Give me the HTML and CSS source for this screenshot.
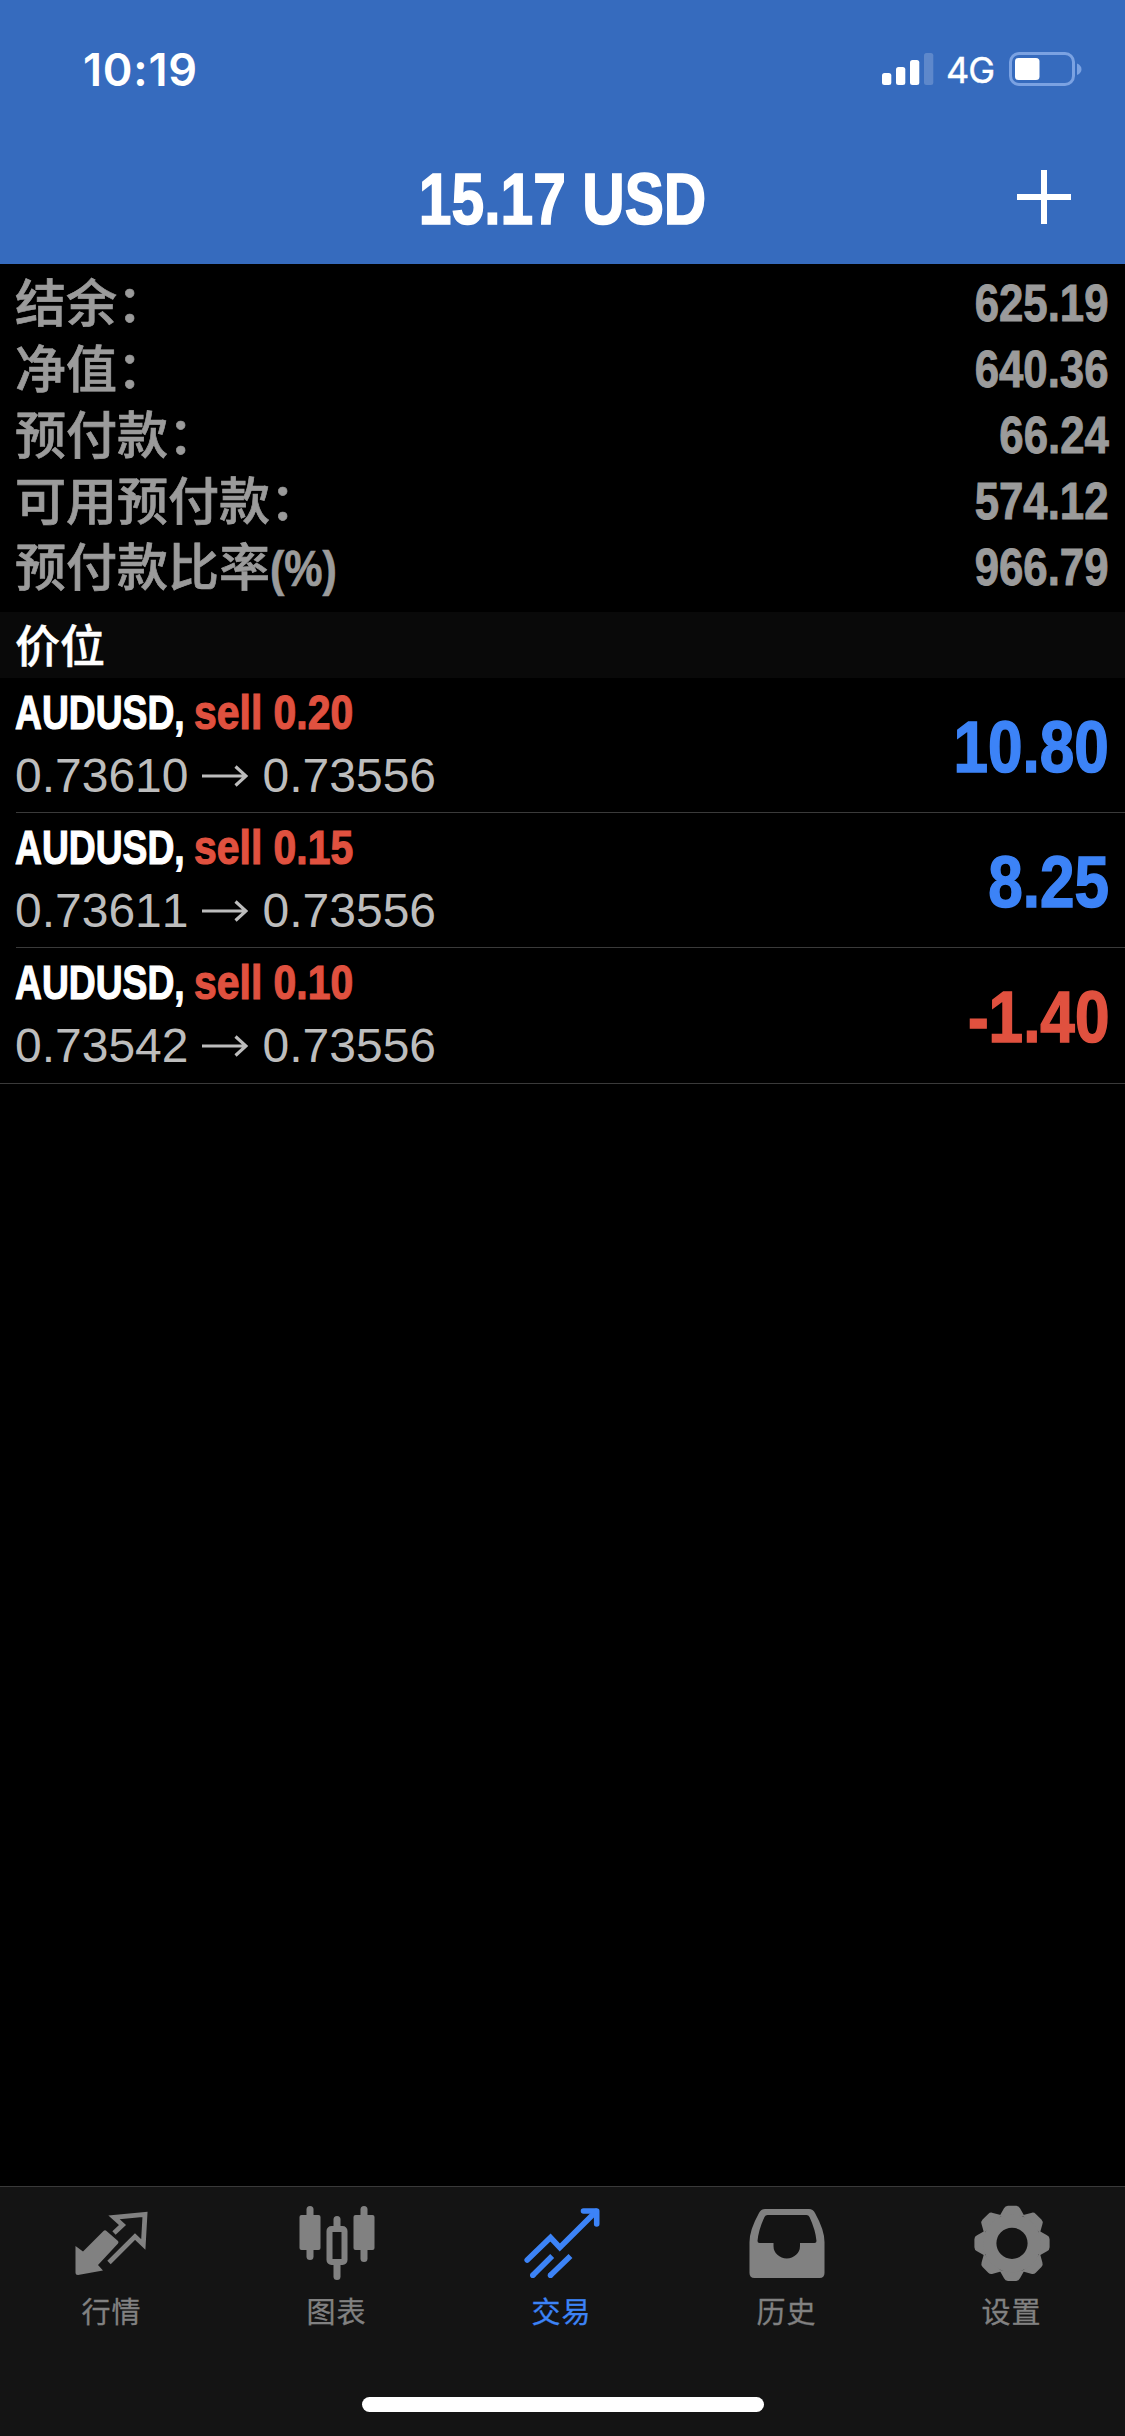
FILE: index.html
```html
<!DOCTYPE html>
<html lang="zh-CN">
<head>
<meta charset="utf-8">
<title>15.17 USD</title>
<link rel="stylesheet" href="styles.css">
</head>
<body>
<div class="app">
  <header class="header">
    <div class="status">
      <span class="time">10:19</span>
      <div class="status-icons">
        <svg class="signal" width="52" height="34" viewBox="0 0 52 34" fill="#fff"><rect x="0" y="21" width="9.3" height="12" rx="2.5"/><rect x="14" y="15" width="9.3" height="18" rx="2.5"/><rect x="28" y="8" width="9.3" height="25" rx="2.5"/><rect x="42" y="1" width="9.3" height="32" rx="2.5" opacity=".2"/></svg>
        <span class="network">4G</span>
        <svg class="battery" width="74" height="34" viewBox="0 0 74 34"><rect x="1.5" y="1.5" width="63" height="31" rx="8.5" fill="none" stroke="#7ba2e2" stroke-width="3"/><rect x="6" y="6" width="24.5" height="22" rx="3.5" fill="#fff"/><path d="M68 11.5c6 2.500 6 9 0 11.500z" fill="#7ba2e2"/></svg>
      </div>
    </div>
    <div class="navbar">
      <h1 class="title"><span class="title-text">15.17 USD</span></h1>
      <svg class="add" width="54" height="54" viewBox="0 0 54 54"><path d="M0 27H54M27 0V54" stroke="#fff" stroke-width="6"/></svg>
    </div>
  </header>

  <main class="content">
    <dl class="summary">
      <div class="summary-row"><dt>结余：</dt><dd>625.19</dd></div>
      <div class="summary-row"><dt>净值：</dt><dd>640.36</dd></div>
      <div class="summary-row"><dt>预付款：</dt><dd>66.24</dd></div>
      <div class="summary-row"><dt>可用预付款：</dt><dd>574.12</dd></div>
      <div class="summary-row"><dt>预付款比率<span class="unit">(%)</span></dt><dd>966.79</dd></div>
    </dl>
    <h2 class="section">价位</h2>
    <ul class="positions">
      <li class="position">
        <div class="details">
          <div class="order"><span class="symbol">AUDUSD,</span><span class="side">sell 0.20</span></div>
          <div class="prices"><span>0.73610</span><svg class="arrow" width="46" height="22" viewBox="0 0 46 22"><path d="M0 11H44M33.500 1.500L44 11L33.500 20.500"/></svg><span>0.73556</span></div>
        </div>
        <span class="profit">10.80</span>
      </li>
      <li class="position">
        <div class="details">
          <div class="order"><span class="symbol">AUDUSD,</span><span class="side">sell 0.15</span></div>
          <div class="prices"><span>0.73611</span><svg class="arrow" width="46" height="22" viewBox="0 0 46 22"><path d="M0 11H44M33.500 1.500L44 11L33.500 20.500"/></svg><span>0.73556</span></div>
        </div>
        <span class="profit">8.25</span>
      </li>
      <li class="position">
        <div class="details">
          <div class="order"><span class="symbol">AUDUSD,</span><span class="side">sell 0.10</span></div>
          <div class="prices"><span>0.73542</span><svg class="arrow" width="46" height="22" viewBox="0 0 46 22"><path d="M0 11H44M33.500 1.500L44 11L33.500 20.500"/></svg><span>0.73556</span></div>
        </div>
        <span class="profit loss">-1.40</span>
      </li>
    </ul>
  </main>

  <footer class="footer">
    <nav class="tabs">
      <div class="tab">
        <svg width="80" height="84" viewBox="0 0 80 84"><path d="M42 33L50.500 25L42 17.300L73 14.300L71.300 44.500L63 36.500L37 62.500" fill="none" stroke="currentColor" stroke-width="4.800"/><path d="M3.500 46L11 51.500L31.500 31Q33 29.500 34.500 31L46 41Q47 42 46 43.500L26 65L31 70.500L6 75Q3.500 75 3.500 72.500z" fill="currentColor"/></svg>
        <span>行情</span>
      </div>
      <div class="tab">
        <svg width="80" height="84" viewBox="0 0 80 84" fill="currentColor"><rect x="9.500" y="6" width="7" height="54" rx="3.500"/><rect x="2.500" y="15" width="21" height="35" rx="2"/><rect x="63.500" y="6" width="7" height="56" rx="3.500"/><rect x="56.500" y="15" width="21" height="35" rx="2"/><rect x="36.500" y="16" width="7" height="14" rx="3.500"/><rect x="36.500" y="61" width="7" height="19" rx="3.500"/><rect x="32.500" y="29" width="15" height="33" rx="2" fill="none" stroke="currentColor" stroke-width="6"/></svg>
        <span>图表</span>
      </div>
      <div class="tab active">
        <svg width="80" height="84" viewBox="0 0 80 84" fill="none" stroke="currentColor" stroke-width="5.600"><path d="M5.200 60L28.500 37.500L37.800 47.500L74 11.500" stroke-linecap="round"/><path d="M61.500 11H74.700V24" stroke-linecap="round" stroke-linejoin="round"/><path d="M30.200 56L10.800 75.300M48.500 56L28.500 75.300"/><g fill="currentColor" stroke="none"><circle cx="10.800" cy="75.300" r="2.800"/><circle cx="28.500" cy="75.300" r="2.800"/></g></svg>
        <span>交易</span>
      </div>
      <div class="tab">
        <svg width="80" height="84" viewBox="0 0 80 84"><path fill="currentColor" fill-rule="evenodd" d="M18 9H62Q66 9 68 13Q77.500 30 77.500 42V73Q77.500 78 72.500 78H7.500Q2.500 78 2.500 73V42Q2.500 30 12 13Q14 9 18 9zM20.500 15Q18.500 15 17.500 17Q11.500 30 10.500 41Q10.500 43 12.500 43H26.500V46A13.200 12.500 0 0 0 53 46V43H67.500Q69.500 43 69.500 41Q68.500 30 62.500 17Q61.500 15 59.500 15z"/></svg>
        <span>历史</span>
      </div>
      <div class="tab">
        <svg width="80" height="84" viewBox="-40 -43.300 80 84"><defs><path id="tooth" d="M-12.500 -27L-8 -35Q-6.800 -37.600 -4 -37.600H4Q6.800 -37.600 8 -35L12.500 -27z"/></defs><g fill="currentColor"><use href="#tooth"/><use href="#tooth" transform="rotate(45)"/><use href="#tooth" transform="rotate(90)"/><use href="#tooth" transform="rotate(135)"/><use href="#tooth" transform="rotate(180)"/><use href="#tooth" transform="rotate(225)"/><use href="#tooth" transform="rotate(270)"/><use href="#tooth" transform="rotate(315)"/></g><circle r="22.300" fill="none" stroke="currentColor" stroke-width="13.400"/></svg>
        <span>设置</span>
      </div>
    </nav>
    <div class="home-indicator"></div>
  </footer>
</div>
</body>
</html>
```
FILE: styles.css
```css
* {
  box-sizing: border-box;
  margin: 0;
  padding: 0;
}

body {
  background: #000;
  color: #fff;
  font-family: "Liberation Sans", "Noto Sans CJK SC", sans-serif;
  font-kerning: none;
}

.app {
  display: flex;
  flex-direction: column;
  width: 1125px;
  height: 2436px;
  overflow: hidden;
}

.header {
  height: 264px;
  background: #366bbe;
}

.status {
  display: flex;
  justify-content: space-between;
  align-items: center;
  height: 132px;
  padding: 6px 42px 0 82px;
}

.time {
  padding: 1px 0 0 1px;
  font: 600 45px/60px Inter, sans-serif;
  letter-spacing: 0.8px;
}

.status-icons {
  display: flex;
  align-items: center;
}

.network {
  width: 60px;
  padding: 1px 0 0 12px;
  font: 400 36px/40px Inter, sans-serif;
  letter-spacing: -1px;
  -webkit-text-stroke: 0.4px currentColor;
}

.battery {
  margin-left: 15px;
}

.navbar {
  display: grid;
  grid-template-columns: 1fr auto 1fr;
  align-items: center;
  height: 132px;
  padding: 0 54px;
}

.title {
  grid-column: 2;
  width: 284px;
  display: flex;
  justify-content: center;
  font-size: 73px;
  line-height: 133px;
  white-space: nowrap;
}

.title-text {
  transform: scaleX(0.805);
  -webkit-text-stroke: 1.6px currentColor;
}

.add {
  justify-self: end;
  margin-bottom: 3px;
}

.content {
  flex: 1;
}

.summary {
  height: 348px;
  padding: 6px 16px 12px 15px;
  color: #9b9b9b;
}

.summary-row {
  display: flex;
  justify-content: space-between;
  height: 66px;
}

dt {
  font: 500 51px/60px "Noto Sans CJK SC", sans-serif;
  -webkit-text-stroke: 0.7px currentColor;
}

.unit {
  display: inline-block;
  font: 700 50px/54px "Liberation Sans", sans-serif;
  transform: scaleX(0.86);
  transform-origin: left;
}

dd {
  font-size: 51.500px;
  font-weight: 700;
  line-height: 66px;
  transform: scaleX(0.85);
  transform-origin: right;
  -webkit-text-stroke: 1px currentColor;
}

.section {
  height: 66px;
  padding-left: 15px;
  background: #090909;
  font: 500 45px/63px "Noto Sans CJK SC", sans-serif;
  -webkit-text-stroke: 0.5px currentColor;
}

.positions {
  list-style: none;
}

.position {
  display: flex;
  justify-content: space-between;
  height: 135px;
  margin-left: 16px;
  padding-right: 16px;
  border-bottom: 1px solid #3a3a3a;
}

.position:last-child {
  height: 136px;
  margin-left: 0;
  padding-left: 16px;
}

.order {
  display: flex;
  height: 66px;
  margin-left: -1px;
  font-size: 49px;
  font-weight: 700;
  line-height: 68px;
  white-space: nowrap;
  -webkit-text-stroke: 1.2px currentColor;
}

.symbol {
  flex: none;
  width: 179px;
  transform: scaleX(0.76);
  transform-origin: left;
}

.side {
  width: 200px;
  color: #e0513f;
  transform: scaleX(0.835);
  transform-origin: left;
}

.prices {
  display: flex;
  align-items: center;
  height: 63px;
  margin-left: -1px;
  color: #bdbdbd;
  font-size: 48px;
  line-height: 60px;
}

.arrow {
  margin: 0 15px 0 13px;
  fill: none;
  stroke: currentColor;
  stroke-width: 3.2;
}

.profit {
  color: #3c83f7;
  font-size: 73px;
  font-weight: 700;
  line-height: 137px;
  transform: scaleX(0.85);
  transform-origin: right;
  -webkit-text-stroke: 1.6px currentColor;
}

.loss {
  color: #e0513f;
}

.footer {
  display: flex;
  flex-direction: column;
  align-items: center;
  height: 250px;
  border-top: 1px solid #3a3a3a;
  background: #141414;
}

.tabs {
  display: grid;
  grid-template-columns: repeat(5, 225px);
  width: 1125px;
  height: 210px;
  padding-top: 13px;
  margin-left: -2px;
}

.tab {
  display: flex;
  flex-direction: column;
  align-items: center;
  color: #818181;
  font: 400 29px/44px "Noto Sans CJK SC", sans-serif;
  letter-spacing: 1px;
}

.tab span {
  margin-top: 4px;
  -webkit-text-stroke: 0.3px currentColor;
}

.active {
  color: #3c83f7;
}

.home-indicator {
  width: 402px;
  height: 15px;
  border-radius: 8px;
  background: #fff;
}
```
